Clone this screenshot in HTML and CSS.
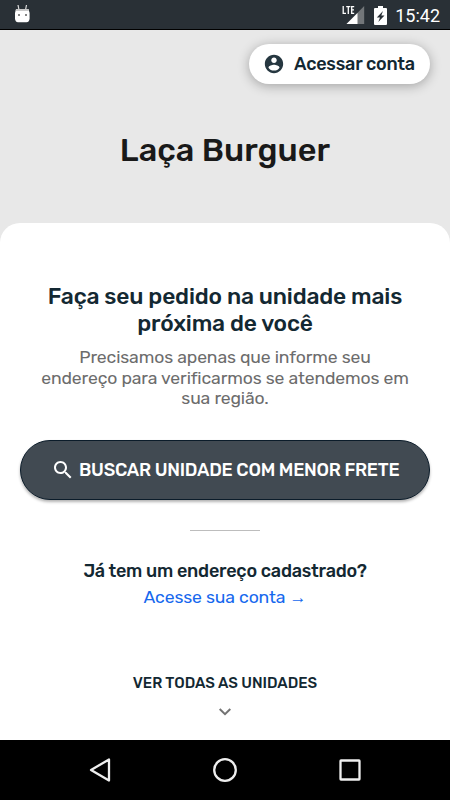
FILE: index.html
```html
<!DOCTYPE html>
<html lang="pt-BR">
<head>
    <meta charset="utf-8">
    <meta name="viewport" content="width=device-width, initial-scale=1">
    <title>Laça Burguer</title>
    <link rel="stylesheet" href="styles.css">
</head>
<body>
    <div class="status_bar">
        <svg class="robot" width="16" height="18" viewBox="0 0 16 18">
            <path d="M4 0L5 5M12.500 0L11.500 5" stroke="#ddd" stroke-width="1.200"/>
            <path d="M2 4H14.500L15.600 8V13.500Q15.400 17 12.500 17.300H4Q1.200 17 1 13.500V8Z" fill="#fff"/>
            <path d="M2.200 4H14.300L14.800 6H1.700Z" fill="#c9c9c9"/>
            <path d="M4 9H6V11H4ZM11 9H13V11H11Z" fill="#858585"/>
        </svg>
        <div class="status_icons">
            <svg class="signal" width="23" height="20" viewBox="0 0 23 20">
                <path d="M22.200 1V19H4.500Z" fill="#727679"/>
                <path d="M15.500 8V19H4.500Z" fill="#fff"/>
                <path d="M0 0H12.500V10H0Z" fill="#293036"/>
                <path d="M1.200 1V8.300H4M4.200 1.600H8.400M6.300 1.600V9M12.200 1.600H9.700V8.300H12.200M9.700 4.900H12" fill="none" stroke="#fff" stroke-width="1.300"/>
            </svg>
            <svg class="battery" width="13" height="19" viewBox="0 0 13 19">
                <path d="M4 0H9V2H12Q13 2 13 3V18Q13 19 12 19H1Q0 19 0 18V3Q0 2 1 2H4Z" fill="#fff"/>
                <path d="M9 5L2.800 11.500H6L4.300 16L10.500 9.500H7.300Z" fill="#293036"/>
            </svg>
            <span class="clock">15:42</span>
        </div>
    </div>

    <header class="header">
        <a class="account_button">
            <svg width="22" height="22" viewBox="0 0 24 24">
                <path fill="#263740" d="M12 2C6.480 2 2 6.480 2 12s4.480 10 10 10 10-4.480 10-10S17.520 2 12 2zm0 3c1.660 0 3 1.340 3 3s-1.340 3-3 3-3-1.340-3-3 1.340-3 3-3zm0 14.200c-2.500 0-4.710-1.280-6-3.220.03-1.990 4-3.080 6-3.080 1.990 0 5.970 1.090 6 3.080-1.290 1.940-3.500 3.220-6 3.220z"/>
            </svg>
            <span>Acessar conta</span>
        </a>
        <h1 class="title">Laça Burguer</h1>
    </header>

    <main class="content">
        <h2 class="heading">Faça seu pedido na unidade mais<br>próxima de você</h2>
        <p class="description">Precisamos apenas que informe seu<br>endereço para verificarmos se atendemos em<br>sua região.</p>
        <button type="button" class="search_button">
            <svg width="24" height="24" viewBox="0 0 24 24">
                <path fill="#fff" d="M15.500 14h-.79l-.28-.27C15.410 12.590 16 11.110 16 9.500 16 5.910 13.090 3 9.500 3S3 5.910 3 9.500 5.910 16 9.500 16c1.610 0 3.090-.59 4.230-1.570l.27.28v.79l5 4.990L20.490 19l-4.990-5zm-6 0C7.010 14 5 11.990 5 9.500S7.010 5 9.500 5 14 7.010 14 9.500 11.990 14 9.500 14z"/>
            </svg>
            <span>BUSCAR UNIDADE COM MENOR FRETE</span>
        </button>
        <hr class="divider">
        <p class="question">Já tem um endereço cadastrado?</p>
        <a class="login_link">Acesse sua conta <span class="arrow">→</span></a>
        <a class="all_units">VER TODAS AS UNIDADES</a>
        <svg class="chevron" width="14" height="10" viewBox="0 0 14 10">
            <path d="M1.700 2L7 7.200L12.300 2" fill="none" stroke="#737373" stroke-width="2"/>
        </svg>
    </main>

    <nav class="nav_bar">
        <svg width="26" height="26" viewBox="0 0 26 26"><path d="M22 2.500V23.500L4 13Z"/></svg>
        <svg width="26" height="26" viewBox="0 0 26 26"><circle cx="13" cy="13" r="10.800"/></svg>
        <svg width="26" height="26" viewBox="0 0 26 26"><rect x="3.500" y="3.500" width="19" height="19" rx=".5"/></svg>
    </nav>
</body>
</html>
```

FILE: styles.css
```css
* {
    box-sizing: border-box;
}

body {
    display: flex;
    flex-direction: column;
    height: 800px;
    margin: 0;
    background: #e8e8e8;
    color: #132832;
    font-family: Rubik, Roboto, sans-serif;
    font-size: 18px;
    letter-spacing: -0.22px;
    overflow: hidden;
}

h1, h2, p {
    margin: 0;
}

.status_bar {
    display: flex;
    justify-content: space-between;
    height: 30px;
    padding: 5px 10px 0 14px;
    background: #293036;
    border-bottom: 1px solid #000;
    color: #fff;
}

.status_icons {
    display: flex;
}

.battery {
    margin: 1px 8px 0 9px;
}

.clock {
    font-family: Roboto, sans-serif;
    font-size: 18px;
    line-height: 21px;
    letter-spacing: 0;
}

.header {
    display: flex;
    flex-direction: column;
    height: 193px;
    padding: 14px 20px 0;
}

.account_button {
    display: flex;
    align-items: center;
    align-self: flex-end;
    width: 181px;
    height: 40px;
    padding: 0 0 1px 14px;
    gap: 9px;
    border-radius: 20px;
    background: #fff;
    box-shadow: 0 2px 12px rgba(0, 0, 0, 0.3);
    font-weight: 500;
    white-space: nowrap;
}

.title {
    margin-top: 46px;
    color: #191919;
    font-size: 32.5px;
    font-weight: 500;
    line-height: 40px;
    letter-spacing: 0;
    text-align: center;
}

.content {
    display: flex;
    flex-direction: column;
    align-items: center;
    height: 517px;
    padding: 60px 20px 0;
    border-radius: 20px 20px 0 0;
    background: #fff;
    text-align: center;
    white-space: nowrap;
}

.heading {
    font-size: 22.8px;
    font-weight: 500;
    line-height: 27px;
    letter-spacing: -0.18px;
}

.description {
    margin-top: 10px;
    color: #6c6c6c;
    font-size: 17.6px;
    line-height: 20.7px;
    letter-spacing: -0.13px;
}

.search_button {
    display: flex;
    align-items: center;
    flex: none;
    width: 410px;
    height: 60px;
    margin-top: 31px;
    padding: 0 0 0 30px;
    gap: 4px;
    border: 1px solid #0b1c2a;
    border-radius: 30px;
    background: #414a52;
    box-shadow: 0 2px 3px rgba(0, 0, 0, 0.3);
    color: #fff;
    font-family: inherit;
    font-size: 18px;
    font-weight: 500;
    letter-spacing: -0.27px;
    white-space: nowrap;
}

.divider {
    width: 70px;
    height: 1px;
    margin: 30px 0 0;
    border: 0;
    background: #bdbdbd;
}

.question {
    margin-top: 27px;
    font-weight: 500;
    line-height: 26px;
}

.login_link {
    color: #1668ee;
    font-size: 17.6px;
    line-height: 26px;
    letter-spacing: -0.13px;
}

.arrow {
    font-family: "Liberation Sans", sans-serif;
    font-size: 17px;
}

.all_units {
    margin-top: 62px;
    font-size: 15px;
    font-weight: 500;
    line-height: 20px;
    letter-spacing: 0;
}

.chevron {
    margin-top: 14px;
}

.nav_bar {
    display: flex;
    justify-content: space-between;
    align-items: center;
    height: 60px;
    padding: 0 87px;
    background: #000;
}

.nav_bar svg {
    fill: none;
    stroke: #eee;
    stroke-width: 2.3;
    stroke-linejoin: round;
}
```
